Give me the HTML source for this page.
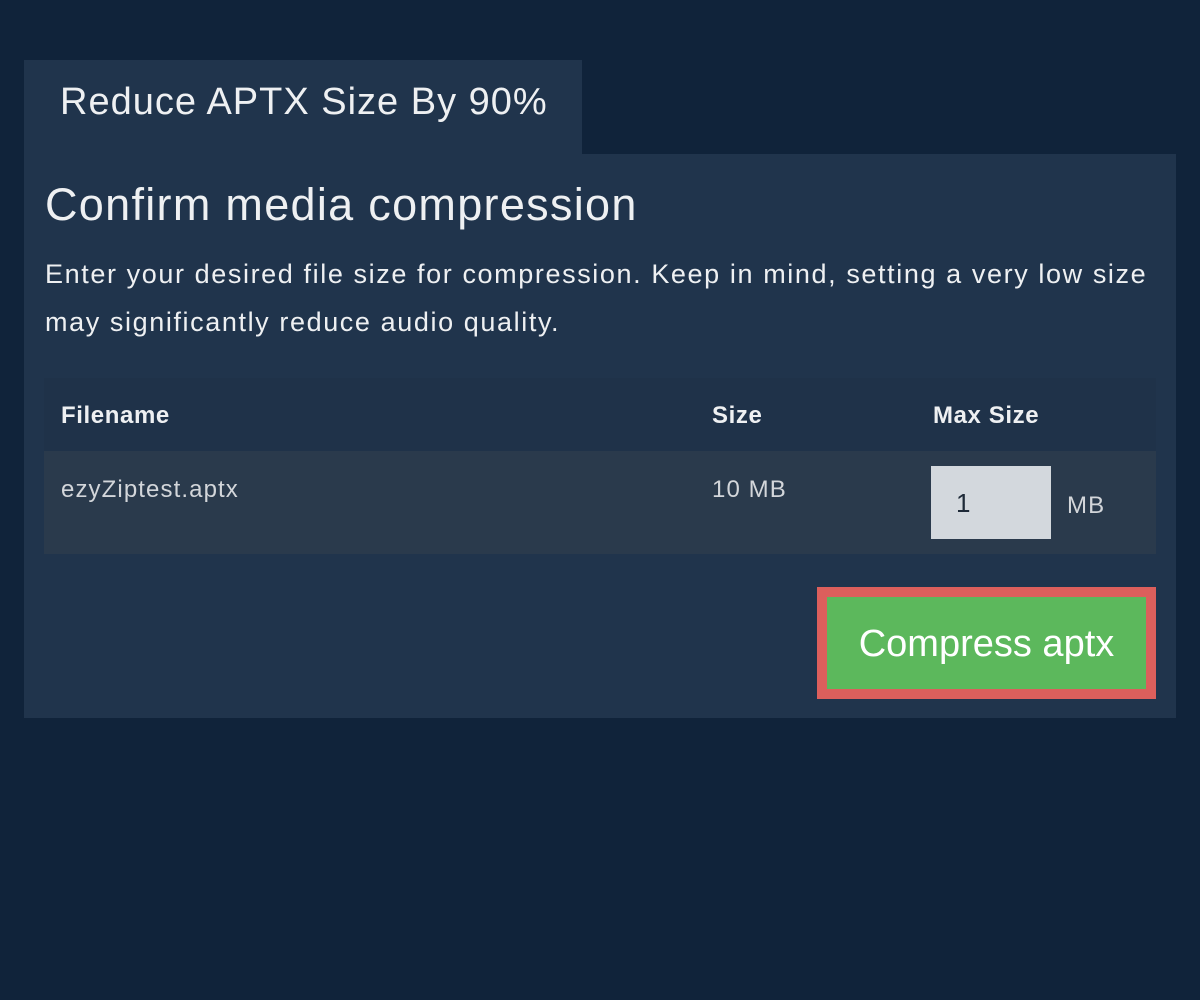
<!DOCTYPE html>
<html><head><style>
*{margin:0;padding:0;box-sizing:border-box}
body{width:1200px;height:1000px;background:#10233a;font-family:"Liberation Sans",sans-serif;color:#eef0f2;position:relative;overflow:hidden}
.tab{position:absolute;left:24px;top:60px;width:558px;height:95px;background:#20344c;font-size:38px;font-weight:300;padding-left:36px;line-height:84px;letter-spacing:1px}
.panel{position:absolute;left:24px;top:154px;width:1152px;height:564px;background:#20344c}
h1{position:absolute;left:21px;top:25px;font-size:45px;font-weight:normal;letter-spacing:1.3px;white-space:nowrap}
p{position:absolute;left:21px;top:96px;width:1140px;font-size:27px;line-height:48px;letter-spacing:1.6px}
.th{position:absolute;left:20px;top:224px;width:1112px;height:73px;background:#1f3249;font-weight:bold;font-size:24px;letter-spacing:0.6px}
.tr{position:absolute;left:20px;top:297px;width:1112px;height:103px;background:#2a3a4c;font-size:24px;color:#d3d6da;letter-spacing:1.1px}
.th span,.tr span{position:absolute;top:22px;white-space:nowrap}
.inp{position:absolute;left:887px;top:15px;width:120px;height:73px;background:#d3d8dd;color:#1e2a38;font-size:26px;padding:22px 0 0 25px}
.btn{position:absolute;left:793px;top:433px;width:339px;height:112px;border:10px solid #dc5f5c;background:#5cb85c;font-size:38px;font-weight:300;text-align:center;line-height:94px;color:#fff}
</style></head><body>
<div class="tab">Reduce APTX Size By 90%</div>
<div class="panel">
<h1>Confirm media compression</h1>
<p>Enter your desired file size for compression. Keep in mind, setting a very low size may significantly reduce audio quality.</p>
<div class="th"><span style="left:17px;top:24px">Filename</span><span style="left:668px;top:24px">Size</span><span style="left:889px;top:24px">Max Size</span></div>
<div class="tr"><span style="left:17px;top:25px">ezyZiptest.aptx</span><span style="left:668px;top:25px">10 MB</span><div class="inp">1</div><span style="left:1023px;top:41px">MB</span></div>
<div class="btn">Compress aptx</div>
</div>
</body></html>
